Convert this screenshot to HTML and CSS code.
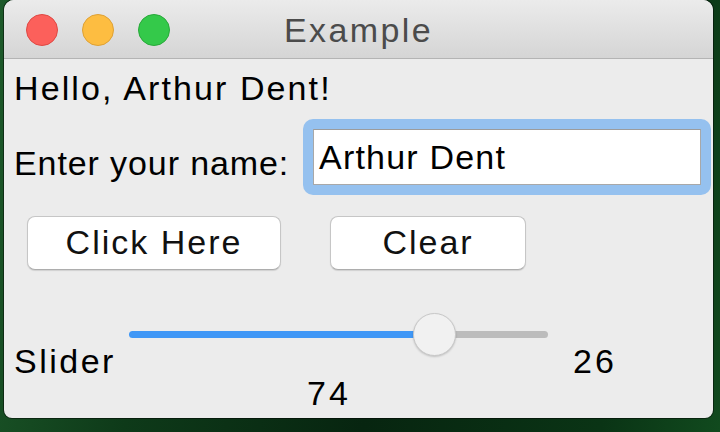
FILE: index.html
```html
<!DOCTYPE html>
<html>
<head>
<meta charset="utf-8">
<title>Example</title>
<link rel="stylesheet" href="styles.css">
</head>
<body>
<div class="window">
  <div class="titlebar">
    <div class="lights">
      <span class="light red"></span>
      <span class="light yellow"></span>
      <span class="light green"></span>
    </div>
    <div class="title">Example</div>
    <div></div>
  </div>
  <div class="content">
    <div class="greeting">Hello, Arthur Dent!</div>
    <div class="name-row">
      <label class="name-label">Enter your name:</label>
      <div class="focus-ring">
        <div class="field">Arthur Dent</div>
      </div>
    </div>
    <div class="buttons">
      <div class="btn btn-click">Click Here</div>
      <div class="btn btn-clear">Clear</div>
    </div>
    <div class="slider-grid">
      <div class="slider-label">Slider</div>
      <div class="slider">
        <div class="track"></div>
        <div class="knob"></div>
      </div>
      <div class="slider-rest">26</div>
      <div class="slider-value">74</div>
    </div>
  </div>
</div>
</body>
</html>
```
FILE: styles.css
```css
* { box-sizing: border-box; }
html, body { margin: 0; padding: 0; }
body {
  width: 720px;
  height: 432px;
  overflow: hidden;
  background: linear-gradient(100deg, #1d5a2a 0%, #0e3a19 25%, #072510 55%, #0a3415 85%, #114a1e 100%);
  font-family: "Liberation Sans", Arial, sans-serif;
  color: #000;
}
.window {
  width: 709px;
  height: 418px;
  margin-left: 4px;
  background: #ececec;
  border-radius: 10px 10px 8px 8px;
  box-shadow: 0 0 0 1px rgba(0,0,0,0.45);
  overflow: hidden;
  display: flex;
  flex-direction: column;
}
.titlebar {
  height: 59px;
  flex: none;
  background: linear-gradient(#ebebeb, #d5d5d5);
  border-bottom: 1px solid #b4b4b4;
  display: grid;
  grid-template-columns: 1fr auto 1fr;
  align-items: center;
}
.lights {
  display: flex;
  gap: 24px;
  padding-left: 22px;
  padding-top: 1px;
}
.light {
  width: 32px;
  height: 32px;
  border-radius: 50%;
  display: block;
}
.red { background: #fc605b; border: 1px solid #df4944; }
.yellow { background: #fdbd41; border: 1px solid #dea135; }
.green { background: #34c94a; border: 1px solid #29a93a; }
.title {
  font-size: 34px;
  letter-spacing: 2.4px;
  color: #4b4b4b;
  line-height: 40px;
  padding-top: 2px;
}
.content {
  padding: 9px 2px 0 9px;
  font-size: 34px;
  letter-spacing: 1px;
}
.greeting {
  line-height: 40px;
  letter-spacing: 2.1px;
  padding-left: 1px;
}
.name-row {
  display: flex;
  margin-top: 11px;
}
.name-label {
  line-height: 40px;
  margin-top: 24px;
  padding-left: 1px;
  letter-spacing: 0.9px;
}
.focus-ring {
  margin-left: auto;
  width: 408px;
  padding: 10px;
  background: #95c1ef;
  border-radius: 10px;
}
.field {
  height: 56px;
  background: #fff;
  border: 1px solid #a8a8a8;
  border-top-color: #9c9c9c;
  padding: 1px 0 0 5px;
  line-height: 53px;
  letter-spacing: 1.2px;
}
.buttons {
  display: flex;
  margin-top: 21px;
}
.btn {
  height: 54px;
  background: #fff;
  border: 1px solid #c6c6c6;
  border-bottom-color: #adadad;
  border-radius: 8px;
  box-shadow: 0 1px 1px rgba(0,0,0,0.12);
  text-align: center;
  line-height: 50px;
  padding-bottom: 2px;
  color: #111;
  letter-spacing: 2px;
}
.btn-click { width: 254px; margin-left: 14px; }
.btn-clear { width: 196px; margin-left: 49px; }
.slider-grid {
  display: grid;
  grid-template-columns: 116px 419px auto;
  grid-template-rows: 64px 32px;
  margin-top: 43px;
}
.slider-label, .slider-rest, .slider-value {
  line-height: 32px;
}
.slider-label { align-self: end; letter-spacing: 2.5px; padding-left: 1px; }
.slider-rest { align-self: end; padding-left: 25px; letter-spacing: 3px; }
.slider-value {
  grid-column: 2;
  grid-row: 2;
  padding-left: 178px;
  letter-spacing: 3px;
}
.slider {
  position: relative;
  height: 43px;
  align-self: start;
}
.track {
  margin-top: 18px;
  height: 7px;
  border-radius: 4px;
  background: linear-gradient(to right, #3f97f6 0, #3f97f6 300px, #bcbcbc 300px);
}
.knob {
  position: absolute;
  left: 284px;
  top: 0;
  width: 43px;
  height: 43px;
  border-radius: 50%;
  background: #f1f1f1;
  border: 1px solid #c8c8c8;
  box-shadow: 0 1px 2px rgba(0,0,0,0.18);
}
```
